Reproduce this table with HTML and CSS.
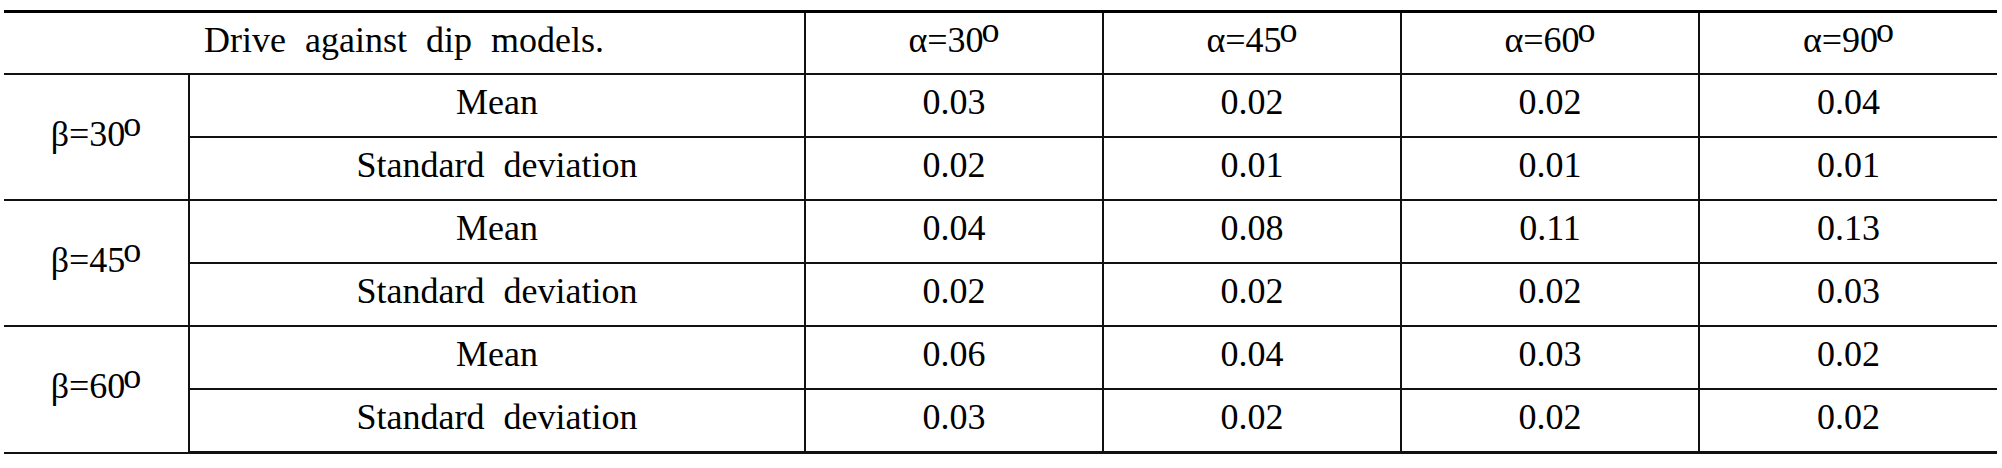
FILE: index.html
```html
<!DOCTYPE html>
<html>
<head>
<meta charset="utf-8">
<link rel="stylesheet" href="styles.css">
</head>
<body>
<div class="page">
<table class="grid">
  <colgroup>
    <col class="c-beta"><col class="c-stat"><col class="c-val"><col class="c-val"><col class="c-val"><col class="c-val">
  </colgroup>
  <tr class="head">
    <td colspan="2">Drive against dip models.</td>
    <td>α=30<span class="deg">o</span></td>
    <td>α=45<span class="deg">o</span></td>
    <td>α=60<span class="deg">o</span></td>
    <td>α=90<span class="deg">o</span></td>
  </tr>
  <tr>
    <td rowspan="2">β=30<span class="deg">o</span></td>
    <td>Mean</td><td>0.03</td><td>0.02</td><td>0.02</td><td>0.04</td>
  </tr>
  <tr>
    <td>Standard deviation</td><td>0.02</td><td>0.01</td><td>0.01</td><td>0.01</td>
  </tr>
  <tr>
    <td rowspan="2">β=45<span class="deg">o</span></td>
    <td>Mean</td><td>0.04</td><td>0.08</td><td>0.11</td><td>0.13</td>
  </tr>
  <tr>
    <td>Standard deviation</td><td>0.02</td><td>0.02</td><td>0.02</td><td>0.03</td>
  </tr>
  <tr>
    <td rowspan="2">β=60<span class="deg">o</span></td>
    <td>Mean</td><td>0.06</td><td>0.04</td><td>0.03</td><td>0.02</td>
  </tr>
  <tr class="last">
    <td>Standard deviation</td><td>0.03</td><td>0.02</td><td>0.02</td><td>0.02</td>
  </tr>
</table>
</div>
</body>
</html>
```

FILE: styles.css
```css
html, body {
  margin: 0;
  padding: 0;
  background: #fff;
}
.page {
  padding: 10px 6px 0 4px;
}
.grid {
  width: 1992px;
  border-collapse: collapse;
  table-layout: fixed;
  font-family: "Liberation Serif", "Times New Roman", serif;
  font-size: 36px;
  color: #000;
  word-spacing: 10px;
}
.c-beta { width: 185px; }
.c-stat { width: 616px; }
.c-val { width: 298px; }
.grid td {
  border: 2px solid #111;
  text-align: center;
  vertical-align: middle;
  height: 55px;
  padding: 0 0 6px 0;
  line-height: 41px;
  white-space: nowrap;
}
.grid tr td:first-child { border-left: none; }
.grid tr td:last-child { border-right: none; }
.grid tr:not(.head) td[rowspan] { border-left: none; }
.grid tr.head td { border-top: 3px solid #000; height: 54px; }
.grid tr.last td { border-bottom: 3px solid #111; }
.deg {
  position: relative;
  top: -10px;
  margin-left: -2px;
}
```
